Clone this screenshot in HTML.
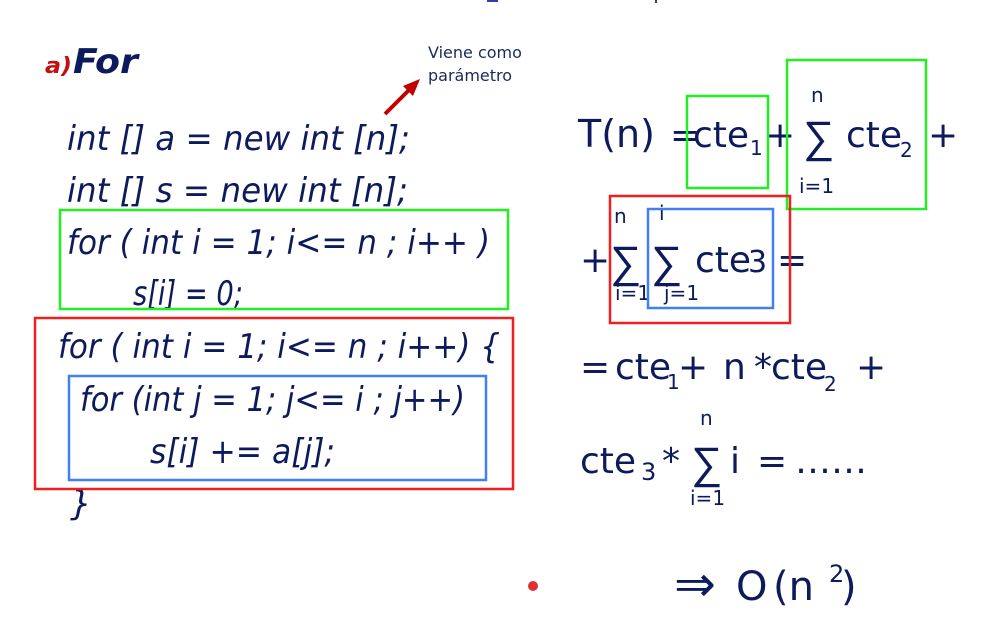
<!DOCTYPE html>
<html><head><meta charset="utf-8"><style>
html,body{margin:0;padding:0;background:#fff;}
svg{display:block;}
text{font-family:"DejaVu Sans","Liberation Sans",sans-serif;fill:#0d1b5c;}
.c{font-style:italic;font-size:34px;}
.m{font-size:36px;}
.g{font-size:44px;font-family:"Liberation Sans",sans-serif;}
.s{font-size:20px;}
</style></head><body>
<svg width="994" height="622" viewBox="0 0 994 622" xmlns="http://www.w3.org/2000/svg">
<rect x="487" y="0" width="11" height="2" fill="#3a3aa8"/>
<rect x="655" y="0" width="2" height="3" fill="#3a3aa8"/>
<text x="45" y="73" style="font-size:22px;font-style:italic;font-weight:bold;fill:#c01010" textLength="27" lengthAdjust="spacingAndGlyphs">a)</text>
<text x="73" y="73" style="font-size:34px;font-style:italic;font-weight:bold" textLength="65" lengthAdjust="spacingAndGlyphs">For</text>
<text x="428" y="58" style="font-size:16px;fill:#1a2a5a">Viene como</text>
<text x="428" y="81" style="font-size:16px;fill:#1a2a5a">parámetro</text>
<line x1="385" y1="114" x2="410" y2="89" stroke="#c00000" stroke-width="4"/>
<polygon points="420,79 403,86 413,96" fill="#c00000"/>

<text class="c" x="67" y="150" textLength="343" lengthAdjust="spacingAndGlyphs">int [] a = new int [n];</text>
<text class="c" x="67" y="202" textLength="341" lengthAdjust="spacingAndGlyphs">int [] s = new int [n];</text>
<text class="c" x="67" y="254" textLength="423" lengthAdjust="spacingAndGlyphs">for ( int i = 1; i&lt;= n ; i++ )</text>
<text class="c" x="133" y="305" textLength="110" lengthAdjust="spacingAndGlyphs">s[i] = 0;</text>
<text class="c" x="58" y="358" textLength="442" lengthAdjust="spacingAndGlyphs">for ( int i = 1; i&lt;= n ; i++) {</text>
<text class="c" x="80" y="411" textLength="385" lengthAdjust="spacingAndGlyphs">for (int j = 1; j&lt;= i ; j++)</text>
<text class="c" x="150" y="463" textLength="185" lengthAdjust="spacingAndGlyphs">s[i] += a[j];</text>
<text class="c" x="70" y="515">}</text>

<rect x="60" y="210" width="448" height="99" fill="none" stroke="#22ee22" stroke-width="2.5"/>
<rect x="35" y="318" width="478" height="171" fill="none" stroke="#ee2020" stroke-width="2.5"/>
<rect x="69" y="376" width="417" height="104" fill="none" stroke="#4080f0" stroke-width="2.5"/>

<text class="m" x="578" y="147" style="font-size:38px">T(n)</text>
<text class="m" x="670" y="147">=</text>
<text class="m" x="693" y="147">cte</text>
<text class="s" x="750" y="155">1</text>
<text class="m" x="765" y="147">+</text>
<text class="s" x="811" y="102">n</text>
<text class="g" x="803" y="152">∑</text>
<text class="m" x="846" y="147">cte</text>
<text class="s" x="900" y="157">2</text>
<text class="m" x="928" y="147">+</text>
<text class="s" x="799" y="193">i=1</text>

<text class="m" x="580" y="272">+</text>
<text class="s" x="614" y="223">n</text>
<text class="g" x="610" y="277">∑</text>
<text class="s" x="659" y="220">i</text>
<text class="g" x="651" y="277">∑</text>
<text class="m" x="695" y="272">cte</text>
<text class="m" x="748" y="272" style="font-size:30px">3</text>
<text class="m" x="777" y="272">=</text>
<text class="s" x="615" y="300">i=1</text>
<text class="s" x="664" y="300">j=1</text>
<rect x="687" y="96" width="81" height="92" fill="none" stroke="#22ee22" stroke-width="2.5"/>
<rect x="787" y="60" width="139" height="149" fill="none" stroke="#22ee22" stroke-width="2.5"/>
<rect x="610" y="196" width="180" height="127" fill="none" stroke="#ee2020" stroke-width="2.5"/>
<rect x="648" y="209" width="125" height="99" fill="none" stroke="#4080f0" stroke-width="2.5"/>

<text class="m" x="580" y="379">=</text>
<text class="m" x="615" y="379">cte</text>
<text class="s" x="667" y="389">1</text>
<text class="m" x="678" y="379">+</text>
<text class="m" x="723" y="379">n</text>
<text class="m" x="754" y="379">*</text>
<text class="m" x="771" y="379">cte</text>
<text class="s" x="824" y="391">2</text>
<text class="m" x="856" y="379">+</text>

<text class="s" x="700" y="425">n</text>
<text class="m" x="580" y="473">cte</text>
<text class="m" x="641" y="480" style="font-size:24px">3</text>
<text class="m" x="662" y="473">*</text>
<text class="g" x="691" y="478">∑</text>
<text class="m" x="730" y="473">i</text>
<text class="m" x="757" y="473">=</text>
<text class="m" x="795" y="473">……</text>
<text class="s" x="690" y="505">i=1</text>

<circle cx="533" cy="586" r="5" fill="#e03030"/>
<text class="m" x="674" y="601" style="font-size:50px">⇒</text>
<text class="m" x="736" y="600" style="font-size:40px">O</text>
<text class="m" x="773" y="600" style="font-size:40px">(n</text>
<text class="s" x="829" y="582" style="font-size:24px">2</text>
<text class="m" x="841" y="600" style="font-size:40px">)</text>
</svg>
</body></html>
